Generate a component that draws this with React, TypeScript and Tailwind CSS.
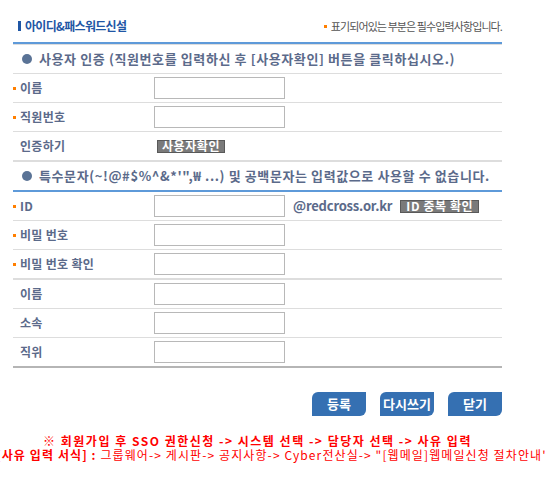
import React from "react";

const font = "font-['Noto_Sans_CJK_KR','Noto_Sans',sans-serif]";

function Dot() {
  return <span className="absolute left-0 top-[13px] h-[3px] w-[3px] bg-[#ff7f00]" />;
}

function Label({ text, required }: { text: string; required?: boolean }) {
  return (
    <div className="relative w-[141px] shrink-0 pl-[7px] text-[12px] font-bold leading-[28px] tracking-[0.3px] text-[#5b6a8a]">
      {required && <Dot />}
      {text}
    </div>
  );
}

function Field() {
  return <input className="h-[22px] w-[131px] border border-[#b8b8b8] bg-white outline-none" />;
}

function Row({
  label,
  required,
  border = "border-b border-[#dddddd]",
  children,
}: {
  label: string;
  required?: boolean;
  border?: string;
  children?: React.ReactNode;
}) {
  return (
    <div className={`flex h-[29px] items-start ${border}`}>
      <Label text={label} required={required} />
      <div className="flex h-[28px] items-center">{children ?? <Field />}</div>
    </div>
  );
}

function Heading({ text }: { text: string }) {
  return (
    <div className="flex h-[28px] items-center pl-[9px] text-[13px] font-bold text-[#5b6a8a]">
      <span className="mr-[7px] h-[10px] w-[10px] rounded-full bg-[#5a7396]" />
      <span className="tracking-[0.6px]">{text}</span>
    </div>
  );
}

function GrayButton({ text, width }: { text: string; width: string }) {
  return (
    <button
      className={`flex h-[13px] ${width} items-center justify-center border border-[#595959] bg-[#7a7a7a] text-[12px] font-bold leading-none tracking-[0.6px] text-white`}
    >
      {text}
    </button>
  );
}

function BlueButton({ text }: { text: string }) {
  return (
    <button className="h-[24px] w-[54px] rounded-tl-[6px] rounded-br-[6px] bg-[#3570b2] text-[13px] font-bold text-white">
      {text}
    </button>
  );
}

export default function App() {
  return (
    <div className={`${font} w-[545px] overflow-hidden bg-white`}>
      <div className="ml-[13px] w-[489px]">
        <div className="flex items-center justify-between pt-[19px] pb-[9px] leading-[14px]">
          <div className="flex items-center pl-[5px]">
            <span className="mr-[4px] h-[10px] w-[3px] bg-[#1f56a5]" />
            <span className="text-[12px] font-bold tracking-[-0.7px] text-[#1f56a5]">아이디&패스워드신설</span>
          </div>
          <div className="flex items-center text-[11px] tracking-[-0.9px] text-[#555555]">
            <span className="mr-[4px] h-[3px] w-[3px] bg-[#ff7f00]" />
            표기되어있는 부분은 필수입력사항입니다.
          </div>
        </div>

        <div className="border-t-2 border-[#5e9ad9]" />
        <div className="border-t border-[#dddddd]" />
        <div className="border-b border-[#dddddd]">
          <Heading text="사용자 인증 (직원번호를 입력하신 후 [사용자확인] 버튼을 클릭하십시오.)" />
        </div>
        <Row label="이름" required />
        <Row label="직원번호" required />
        <Row label="인증하기" border="h-[30px] border-b-2 border-[#dddddd]">
          <GrayButton text="사용자확인" width="w-[68px] ml-[3px]" />
        </Row>

        <div className="border-b-2 border-[#5e9ad9]">
          <Heading text="특수문자(~!@#$%^&*'&quot;,₩ ...) 및 공백문자는 입력값으로 사용할 수 없습니다." />
        </div>
        <Row label="ID" required>
          <Field />
          <span className="ml-[8px] mr-[8px] text-[13px] font-bold tracking-[-0.2px] text-[#5b6a8a]">@redcross.or.kr</span>
          <GrayButton text="ID 중복 확인" width="w-[79px]" />
        </Row>
        <Row label="비밀 번호" required />
        <Row label="비밀 번호 확인" required border="h-[30px] border-b-2 border-[#dddddd]" />
        <Row label="이름" />
        <Row label="소속" />
        <Row label="직위" border="h-[30px] border-b-2 border-[#b5b5b5]" />

        <div className="mt-[24px] flex justify-end gap-[14px]">
          <BlueButton text="등록" />
          <BlueButton text="다시쓰기" />
          <BlueButton text="닫기" />
        </div>
      </div>

      <div className="mt-[18px] pb-[20px] text-[12px] leading-[14px] text-[#ff0000]">
        <div className="ml-[13px] flex w-[489px] justify-center whitespace-nowrap font-bold tracking-[1.5px]">
          ※ 회원가입 후 SSO 권한신청 -&gt; 시스템 선택 -&gt; 담당자 선택 -&gt; 사유 입력
        </div>
        <div className="flex justify-center whitespace-nowrap tracking-[1.1px]">
          <span>
            <b>[사유 입력 서식] : </b>그룹웨어-&gt; 게시판-&gt; 공지사항-&gt; Cyber전산실-&gt; "[웹메일]웹메일신청 절차안내"
          </span>
        </div>
      </div>
    </div>
  );
}
